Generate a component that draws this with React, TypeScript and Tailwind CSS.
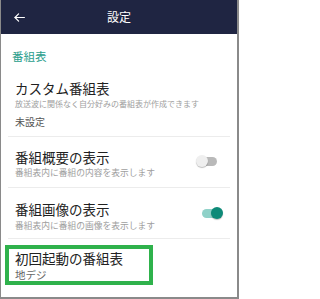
import React from 'react';

const font = { fontFamily: '"Noto Sans CJK JP", "Noto Sans", sans-serif' };

const Toggle = ({ on, className }: { on: boolean; className: string }) => (
  <div className={`relative w-[22px] h-[12px] shrink-0 ${className}`}>
    {on ? (
      <>
        <div className="absolute left-[1px] right-[2px] top-[2px] h-[9px] rounded-full bg-[#8fd1c8]" />
        <div className="absolute right-0 top-0 w-[12px] h-[12px] rounded-full bg-[#0e8a78] shadow-[0_1px_1px_rgba(0,0,0,0.25)]" />
      </>
    ) : (
      <>
        <div className="absolute left-[2px] right-[1px] top-[2px] h-[9px] rounded-full bg-[#b9b9b9]" />
        <div className="absolute left-0 top-0 w-[12px] h-[12px] rounded-full bg-[#efefef] shadow-[0_1px_1px_rgba(0,0,0,0.25)]" />
      </>
    )}
  </div>
);

export default function App() {
  return (
    <div
      style={font}
      className="w-[239px] h-[299px] overflow-hidden bg-white border-l border-r-2 border-b-2 border-[#8a8a8a] flex flex-col"
    >
      <header className="h-[34px] shrink-0 bg-[#1f2542] grid grid-cols-[40px_1fr_40px] items-center">
        <div className="pl-[13px] flex items-center">
          <svg width="11" height="9" viewBox="0 0 11 9" fill="none" stroke="white" strokeWidth="1.2" strokeLinecap="round" strokeLinejoin="round">
            <path d="M10.4 4.5H1" />
            <path d="M4.6 0.9L1 4.5L4.6 8.1" />
          </svg>
        </div>
        <h1 className="text-center text-white text-[12px] leading-[16px]">設定</h1>
        <div />
      </header>

      <div className="pl-[11px] pt-[14px] text-[11.5px] leading-[16px] text-[#2a9e8c]">番組表</div>

      <div className="mx-[7px] pl-[7px] pt-[15px] pb-[7px] border-b border-[#ececec]">
        <div className="text-[13.5px] leading-[18px] text-[#212121]">カスタム番組表</div>
        <div className="text-[8px] leading-[14px] text-[#9e9e9e] whitespace-nowrap">放送波に関係なく自分好みの番組表が作成できます</div>
        <div className="mt-[4px] text-[10px] leading-[14px] text-[#555555]">未設定</div>
      </div>

      <div className="ml-[7px] mr-[7px] pl-[7px] pt-[11px] pb-[7px] border-b border-[#ececec] flex justify-between items-start">
        <div>
          <div className="text-[13.5px] leading-[18px] text-[#212121]">番組概要の表示</div>
          <div className="text-[8.75px] leading-[14px] text-[#9e9e9e] whitespace-nowrap">番組表内に番組の内容を表示します</div>
        </div>
        <Toggle on={false} className="mt-[7px] mr-[12px]" />
      </div>

      <div className="ml-[7px] mr-[7px] pl-[7px] pt-[12px] pb-[5px] border-b border-[#ececec] flex justify-between items-start">
        <div>
          <div className="text-[13.5px] leading-[18px] text-[#212121]">番組画像の表示</div>
          <div className="mt-[1px] text-[8.75px] leading-[14px] text-[#9e9e9e] whitespace-nowrap">番組表内に番組の画像を表示します</div>
        </div>
        <Toggle on={true} className="mt-[7px] mr-[7px]" />
      </div>

      <div className="ml-[4px] mt-[6px] w-[148px] border-4 border-[#2fb24c] pl-[6px] pt-[1px]">
        <div className="text-[13.5px] leading-[16px] text-[#212121]">初回起動の番組表</div>
        <div className="mt-[3px] text-[10.5px] leading-[12px] text-[#666666]">地デジ</div>
      </div>
    </div>
  );
}
